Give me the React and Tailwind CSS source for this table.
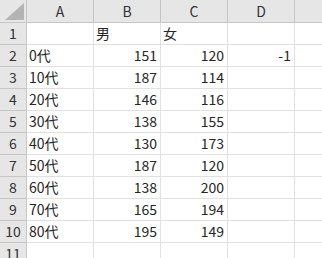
import React from 'react';

const cols = ['A', 'B', 'C', 'D'];

const rows = [
  { n: 1, a: '', b: '男', c: '女', d: '' },
  { n: 2, a: '0代', b: 151, c: 120, d: -1 },
  { n: 3, a: '10代', b: 187, c: 114 },
  { n: 4, a: '20代', b: 146, c: 116 },
  { n: 5, a: '30代', b: 138, c: 155 },
  { n: 6, a: '40代', b: 130, c: 173 },
  { n: 7, a: '50代', b: 187, c: 120 },
  { n: 8, a: '60代', b: 138, c: 200 },
  { n: 9, a: '70代', b: 165, c: 194 },
  { n: 10, a: '80代', b: 195, c: 149 },
  { n: 11, a: '' },
];

function Cell({ value }) {
  const isNum = typeof value === 'number';
  return (
    <div
      className={`h-[22px] border-r border-b border-[#e1e1e1] flex items-center overflow-hidden whitespace-nowrap ${
        isNum ? 'justify-end pr-[3px]' : 'justify-start pl-[2px]'
      }`}
    >
      {value ?? ''}
    </div>
  );
}

export default function App() {
  return (
    <div
      className="w-[322px] h-[258px] overflow-hidden bg-white text-[14px] text-[#262626]"
      style={{ fontFamily: '"Noto Sans CJK JP", "Noto Sans", sans-serif' }}
    >
      <div className="grid grid-cols-[27px_67px_67px_67px_67px_1fr]">
        {/* header row */}
        <div className="h-[23px] bg-[#e6e6e6] border-r border-b border-[#c6c6c6] relative">
          <svg className="absolute right-[2px] bottom-[2px]" width="19" height="17" viewBox="0 0 19 17">
            <polygon points="19,0 19,17 0,17" fill="#b4b4b4" />
          </svg>
        </div>
        {cols.map((c) => (
          <div
            key={c}
            className="h-[23px] bg-[#e6e6e6] border-r border-b border-[#c6c6c6] flex items-center justify-center text-[#333]"
          >
            {c}
          </div>
        ))}
        <div className="h-[23px] bg-[#e6e6e6] border-b border-[#c6c6c6]" />

        {rows.map((r) => (
          <React.Fragment key={r.n}>
            <div className="h-[22px] bg-[#e6e6e6] border-r border-b border-[#c6c6c6] flex items-center justify-center text-[#333]">
              {r.n}
            </div>
            <Cell value={r.a} />
            <Cell value={r.b} />
            <Cell value={r.c} />
            <Cell value={r.d} />
            <div className="h-[22px] border-b border-[#e1e1e1]" />
          </React.Fragment>
        ))}
      </div>
    </div>
  );
}
